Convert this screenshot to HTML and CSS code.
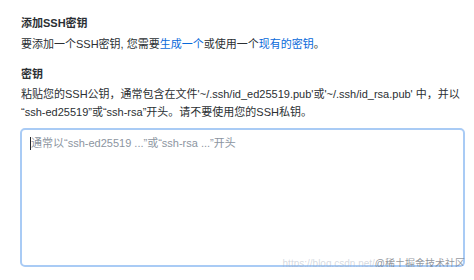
FILE: index.html
```html
<!DOCTYPE html>
<html lang="zh">
<head>
<meta charset="utf-8">
<link rel="stylesheet" href="styles.css">
</head>
<body>
<div class="page">
  <h2 class="title">添加SSH密钥</h2>
  <p class="intro">要添加一个SSH密钥, 您需要<a class="link" href="#">生成一个</a>或使用一个<a class="link" href="#">现有的密钥</a>。</p>
  <label class="label" for="key">密钥</label>
  <p class="help">粘贴您的SSH公钥，通常包含在文件'~/.ssh/id_ed25519.pub'或'~/.ssh/id_rsa.pub' 中，并以<br>“ssh-ed25519”或“ssh-rsa”开头。请不要使用您的SSH私钥。</p>
  <div class="field">
    <div class="input"><span class="caret"></span><span class="placeholder">通常以“ssh-ed25519 ...”或“ssh-rsa ...”开头</span></div>
    <div class="watermark"><span class="wm-url">https://blog.csdn.net/</span><span class="wm-site">@稀土掘金技术社区</span></div>
  </div>
</div>
</body>
</html>
```
FILE: styles.css
```css
html, body {
  margin: 0;
  padding: 0;
  background: #ffffff;
}
.page {
  padding: 14px 9px 0 20px;
  font-family: "Liberation Sans", "Noto Sans CJK SC", sans-serif;
  font-size: 11px;
  line-height: 18px;
  color: #2b2f33;
}
.title {
  margin: 0 0 0 1px;
  font-size: 11px;
  font-weight: bold;
  line-height: 18px;
}
.intro {
  margin: 3px 0 0 1px;
}
.link {
  color: #0969da;
  text-decoration: none;
}
.label {
  display: block;
  margin: 12px 0 0 1px;
  font-weight: bold;
}
.help {
  margin: 2px 0 0 1px;
}
.field {
  position: relative;
  margin-top: 7px;
}
.input {
  box-sizing: border-box;
  width: 445px;
  height: 139px;
  border: 2px solid #a9cbf5;
  border-radius: 5px;
  padding: 4px 8px;
  display: flex;
  align-items: flex-start;
  background: #fff;
}
.caret {
  width: 1px;
  height: 13px;
  margin-top: 3px;
  background: #24292f;
}
.placeholder {
  color: #8c959f;
}
.watermark {
  position: absolute;
  right: 0;
  bottom: -3px;
  font-size: 10px;
  line-height: 12px;
  white-space: nowrap;
}
.wm-url {
  color: rgba(160, 170, 185, 0.45);
}
.wm-site {
  color: rgba(110, 115, 125, 0.75);
}
```
